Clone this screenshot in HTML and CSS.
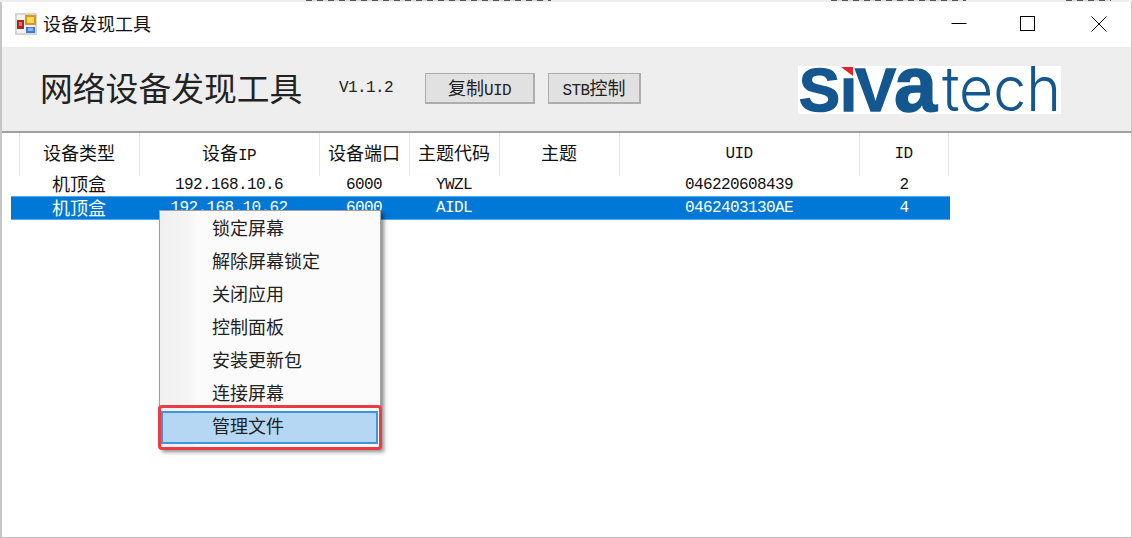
FILE: index.html
```html
<!DOCTYPE html>
<html lang="en">
<head>
  <meta charset="UTF-8" />
  <meta name="viewport" content="width=device-width, initial-scale=1.0"/>
  <title>设备发现工具</title>
  <link rel="stylesheet" href="styles.css">
</head>
<body>

  <!-- the window behind peeks out along the top edge -->
  <div class="peek">
    <div class="peek-bit peek-a"></div>
    <div class="peek-bit peek-b"></div>
    <div class="peek-bit peek-d"></div>
  </div>

  <div class="window">
    <div class="titlebar">
      <svg class="app-icon" width="22" height="22" viewBox="0 0 22 22">
        <rect x="0" y="0" width="22" height="22" fill="#d6d6d6"/>
        <rect x="2" y="2" width="18" height="18" fill="#f4f4f4"/>
        <rect x="10" y="2" width="11" height="10" fill="#d99a12"/>
        <rect x="12" y="4" width="7" height="6" fill="#fbd75a"/>
        <rect x="2" y="7" width="7" height="9" fill="#a8281f"/>
        <rect x="4" y="9" width="3" height="4" fill="#e0706a"/>
        <rect x="11" y="14" width="9" height="6" fill="#3f78d8"/>
        <rect x="13" y="15" width="5" height="3" fill="#8fb8f0"/>
      </svg>
      <span class="title">设备发现工具</span>
      <div class="controls">
        <button class="ctl ctl-min" type="button">
          <svg width="16" height="16" viewBox="0 0 16 16"><path d="M0.5 7.5H15.5" stroke="#000" fill="none"/></svg>
        </button>
        <button class="ctl ctl-max" type="button">
          <svg width="16" height="16" viewBox="0 0 16 16"><rect x="0.5" y="0.5" width="14" height="14" stroke="#000" fill="none"/></svg>
        </button>
        <button class="ctl" type="button">
          <svg width="16" height="16" viewBox="0 0 16 16"><path d="M0.5 0.5L15.5 15.5M15.5 0.5L0.5 15.5" stroke="#000" fill="none"/></svg>
        </button>
      </div>
    </div>

    <div class="toolbar">
      <h1>网络设备发现工具</h1>
      <span class="version lat">V1.1.2</span>
      <button class="btn btn-copy" type="button">复制<span class="lat">UID</span></button>
      <button class="btn btn-stb" type="button"><span class="lat">STB</span>控制</button>
      <svg class="logo" width="263" height="48" viewBox="0 0 263 48">
        <rect width="263" height="48" fill="#fff"/>
        <text class="logo-bold" x="1" y="45" textLength="138" lengthAdjust="spacingAndGlyphs">Sı<tspan dx="-2">V</tspan><tspan class="logo-a" dx="-2">a</tspan></text>
        <path d="M43 1H55V10Z" fill="#e8202a"/>
        <text class="logo-thin" x="144" y="45" textLength="119" lengthAdjust="spacingAndGlyphs">tech</text>
      </svg>
    </div>

    <div class="list">
      <div class="row head">
        <div class="cell">设备类型</div>
        <div class="cell">设备<span class="lat">IP</span></div>
        <div class="cell">设备端口</div>
        <div class="cell">主题代码</div>
        <div class="cell">主题</div>
        <div class="cell lat">UID</div>
        <div class="cell lat">ID</div>
      </div>
      <div class="row item">
        <div class="cell">机顶盒</div>
        <div class="cell lat">192.168.10.6</div>
        <div class="cell lat">6000</div>
        <div class="cell lat">YWZL</div>
        <div class="cell"></div>
        <div class="cell lat">046220608439</div>
        <div class="cell lat">2</div>
      </div>
      <div class="row item selected">
        <div class="cell">机顶盒</div>
        <div class="cell lat">192.168.10.62</div>
        <div class="cell lat">6000</div>
        <div class="cell lat">AIDL</div>
        <div class="cell"></div>
        <div class="cell lat">0462403130AE</div>
        <div class="cell lat">4</div>
      </div>
    </div>
  </div>

  <div class="menu">
    <div class="menu-item">锁定屏幕</div>
    <div class="menu-item">解除屏幕锁定</div>
    <div class="menu-item">关闭应用</div>
    <div class="menu-item">控制面板</div>
    <div class="menu-item">安装更新包</div>
    <div class="menu-item">连接屏幕</div>
    <div class="menu-item active">管理文件</div>
  </div>
  <div class="callout"></div>

</body>
</html>
```

FILE: styles.css
```css
* { box-sizing: border-box; }
html, body {
  margin: 0;
  padding: 0;
  height: 538px;
  overflow: hidden;
}
body {
  font-family: "Noto Sans CJK SC", "Noto Sans", sans-serif;
  font-size: 18px;
  color: #111;
  background: #fff;
  display: flex;
  flex-direction: column;
}
.lat {
  font-family: "Liberation Mono", "Noto Sans CJK SC", monospace;
  font-size: 16px;
  letter-spacing: -0.6px;
}

.peek {
  height: 2px;
  background: #eee;
  display: flex;
  flex: none;
}
.peek-bit {
  height: 1px;
  background: repeating-linear-gradient(90deg, #555 0 6px, #ddd 6px 11px);
}
.peek-a { width: 245px; margin-left: 306px; }
.peek-b { width: 135px; margin-left: 280px; }
.peek-d { width: 45px; margin-left: 100px; }

.window {
  flex: 1;
  display: flex;
  flex-direction: column;
  border-left: 2px solid #c6c6c6;
  border-right: 1px solid #c6c6c6;
  border-bottom: 1px solid #bdbdbd;
  min-height: 0;
}

.titlebar {
  height: 45px;
  flex: none;
  background: #fff;
  display: flex;
  align-items: center;
  padding-left: 13px;
}
.app-icon { margin: 0 6px 2px 0; }
.title {
  line-height: 24px;
  margin-bottom: 3px;
}
.controls {
  margin-left: auto;
  margin-right: -3px;
  display: flex;
  height: 100%;
}
.ctl {
  width: 70px;
  height: 100%;
  padding: 0 0 2px;
  border: none;
  background: transparent;
  display: flex;
  align-items: center;
  justify-content: center;
}
.ctl-min { width: 69px; }
.ctl-max { width: 71px; padding-right: 2px; }

.toolbar {
  height: 84px;
  flex: none;
  background: #eee;
  display: flex;
  align-items: center;
  padding-left: 38px;
}
h1 {
  margin: 0 36.6px 4px 0;
  font-size: 32.8px;
  font-weight: 400;
  line-height: 44px;
  color: #222;
  white-space: nowrap;
}
.version {
  width: 54px;
  margin: 0 32px 2px 0;
  color: #222;
}
.btn {
  height: 31px;
  padding: 0 0 3px;
  margin-bottom: 2px;
  font-family: inherit;
  font-size: 18px;
  color: #222;
  background: #e1e1e1;
  border: 2px solid #adadad;
  border-width: 1px 2px 2px 1px;
}
.btn-copy { width: 110px; margin-right: 13px; }
.btn-stb { width: 93px; }
.logo {
  margin-left: 157px;
  margin-top: 2px;
  overflow: visible;
}
.logo-bold {
  font-family: "Liberation Sans", sans-serif;
  font-weight: 700;
  font-size: 62px;
  fill: #14578f;
  stroke: #14578f;
  stroke-width: 1.5px;
}
.logo-a { font-size: 78px; }
.logo-thin {
  font-family: "Inter", "Liberation Sans", sans-serif;
  font-weight: 300;
  font-size: 62px;
  fill: #14578f;
}

.list {
  flex: 1;
  background: #fff;
  border-top: 2px solid #a0a0a0;
  padding-left: 9px;
}
.row {
  display: grid;
  grid-template-columns: 120px 180px 90px 90px 120px 240px 90px;
  width: 939px;
  padding-left: 8px;
}
.cell {
  text-align: center;
  white-space: nowrap;
}
.head {
  height: 39px;
  align-items: stretch;
}
.head .cell {
  border-left: 1px solid #e6e6e6;
  padding-right: 1px;
  line-height: 39px;
}
.head .cell.lat { line-height: 43px; }
.head .cell:last-child {
  border-right: 1px solid #e6e6e6;
}
.item {
  height: 23.5px;
  line-height: 23px;
}
.item .lat { line-height: 26px; }
.selected {
  height: 24.5px;
  line-height: 21px;
  background: #0078d7;
  color: #fff;
  border: 1px solid #59a8e8;
  border-width: 1px 0;
}
.selected .lat { line-height: 23px; }

/* context menu floats over the list */
.menu {
  position: absolute;
  left: 159px;
  top: 210px;
  width: 222px;
  padding: 2px 2px 4px 1px;
  background: linear-gradient(90deg, #f0f0f0 0, #f5f5f5 30px, #fbfbfb 36px, #fbfbfb 100%);
  border: 1px solid #a0a0a0;
  box-shadow: 3px 3px 4px rgba(0, 0, 0, 0.45);
}
.menu-item {
  height: 33px;
  line-height: 29px;
  padding-left: 51px;
  color: #222;
}
.menu-item.active {
  background: #b5d7f3;
  outline: 2px solid #3e96dc;
  outline-offset: -2px;
}
.callout {
  position: absolute;
  left: 158px;
  top: 405px;
  width: 224px;
  height: 45px;
  border: 3px solid #ee3a43;
  border-radius: 4px;
}
```
